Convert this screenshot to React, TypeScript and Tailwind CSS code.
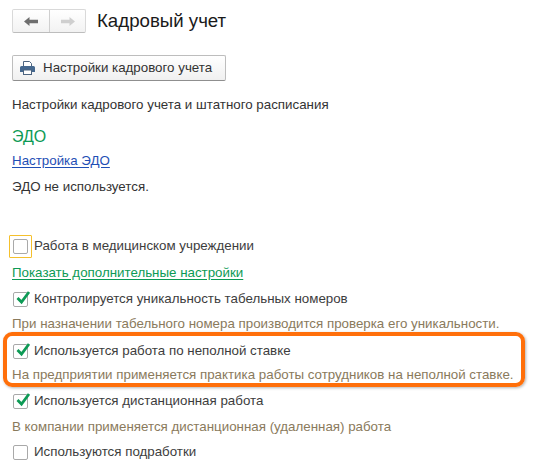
function Arrow({ dir, color }: { dir: "left" | "right"; color: string }) {
  return (
    <svg width="14" height="9" viewBox="0 0 14 10" preserveAspectRatio="none" style={{ transform: dir === "right" ? "scaleX(-1)" : undefined }}>
      <path d="M0 5 L5.5 0 V3 H14 V7 H5.5 V10 Z" fill={color} />
    </svg>
  );
}

function Row({ label, checked, focused, className }: { label: string; checked?: boolean; focused?: boolean; className?: string }) {
  return (
    <div className={`flex h-[16px] items-center pl-[1px] text-[#3d3d3d] ${className ?? ""}`}>
      <span className="relative mr-[6px] h-[15px] w-[15px] shrink-0 rounded-[2px] border border-[#a9a9a9] bg-white">
        {focused ? (
          <span className="absolute left-[-5px] top-[-5px] h-[23px] w-[23px] rounded-[1px] border border-[#f5c02c]" />
        ) : null}
        {checked ? (
          <svg width="16" height="15" viewBox="0 0 16 15" className="absolute left-[1px] top-[-3px]">
            <path d="M2.5 8 L6.5 12 L14 2" fill="none" stroke="#0d9a55" strokeWidth="2.8" />
          </svg>
        ) : null}
      </span>
      <span>{label}</span>
    </div>
  );
}

export default function App() {
  return (
    <div className="relative h-[464px] w-[542px] overflow-hidden bg-white pl-[12px] pt-[9px] text-[13.33px] leading-[16px] text-[#333] [font-family:'Liberation_Sans',Arial,sans-serif]">
      <div className="flex items-center">
        <div className="flex h-[24px] w-[74px] rounded-[2px] border border-[#d9d9d9] border-b-[#bdbdbd] bg-gradient-to-b from-white to-[#f2f2f2]">
          <span className="flex w-[37px] items-center justify-center border-r border-[#cfcfcf]">
            <Arrow dir="left" color="#6e6e6e" />
          </span>
          <span className="flex flex-1 items-center justify-center">
            <Arrow dir="right" color="#cfcfcf" />
          </span>
        </div>
        <h1 className="ml-[11px] text-[18.67px] leading-[24px] text-[#1a1a1a]">Кадровый учет</h1>
      </div>

      <button className="mt-[22px] flex h-[26px] w-[214px] items-center rounded-[2px] border border-[#bdbdbd] border-b-[#8f8f8f] bg-gradient-to-b from-white to-[#f0f0f0] pl-[7px] text-[#333]">
        <svg width="15" height="14" viewBox="0 0 15 14" className="mr-[8px]">
          <path d="M3.5 0.5 H9.5 L11.5 2.5 V6 H3.5 Z" fill="#fff" stroke="#4d6480" />
          <path d="M1.5 5 H13.5 Q15 5 15 6.5 V11 H12 V9 H3 V11 H0 V6.5 Q0 5 1.5 5 Z" fill="#45688f" />
          <rect x="3.5" y="9" width="8" height="4.5" fill="#fff" stroke="#4d6480" />
        </svg>
        Настройки кадрового учета
      </button>

      <p className="mt-[16px]">Настройки кадрового учета и штатного расписания</p>

      <p className="mt-[14px] text-[16px] leading-[20px] text-[#0d9a55]">ЭДО</p>
      <a className="mt-[6px] block text-[#1f4fb5] underline underline-offset-2">Настройка ЭДО</a>
      <p className="mt-[10px]">ЭДО не используется.</p>

      <Row className="mt-[43px]" label="Работа в медицинском учреждении" focused />
      <a className="mt-[11px] block text-[#0d9a55] underline underline-offset-2">Показать дополнительные настройки</a>
      <Row className="mt-[10px]" label="Контролируется уникальность табельных номеров" checked />
      <p className="mt-[9px] text-[#8a7a5c]">При назначении табельного номера производится проверка его уникальности.</p>
      <Row className="mt-[11px]" label="Используется работа по неполной ставке" checked />
      <p className="mt-[8px] text-[#8a7a5c]">На предприятии применяется практика работы сотрудников на неполной ставке.</p>
      <Row className="mt-[10px]" label="Используется дистанционная работа" checked />
      <p className="mt-[10px] text-[#8a7a5c]">В компании применяется дистанционная (удаленная) работа</p>
      <Row className="mt-[9px]" label="Используются подработки" />

      <div className="absolute left-[3px] top-[332px] h-[55px] w-[522px] rounded-[9px] border-[4px] border-[#ff6f0a] shadow-[1px_1px_3px_rgba(0,0,0,0.3)]" />
    </div>
  );
}
